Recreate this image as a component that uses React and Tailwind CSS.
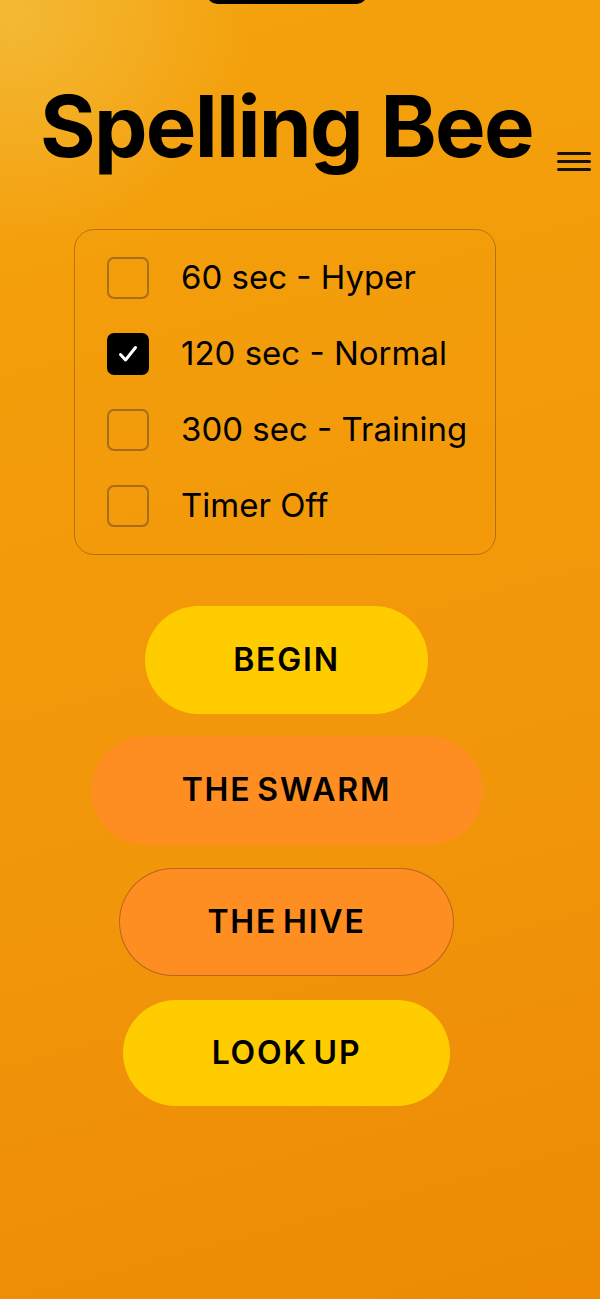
import React from "react";

const options = [
  { label: "60 sec - Hyper", checked: false },
  { label: "120 sec - Normal", checked: true },
  { label: "300 sec - Training", checked: false },
  { label: "Timer Off", checked: false },
];

function Box({ checked }) {
  if (checked) {
    return (
      <div className="w-[42px] h-[42px] rounded-[7px] bg-black flex items-center justify-center shrink-0">
        <svg width="24" height="24" viewBox="0 0 24 24" fill="none">
          <polyline points="4.5,12.5 9.5,18 19.5,5.5" stroke="white" strokeWidth="3" strokeLinecap="round" strokeLinejoin="round" />
        </svg>
      </div>
    );
  }
  return <div className="w-[42px] h-[42px] rounded-[7px] border-2 border-[rgba(70,55,40,0.45)] shrink-0" />;
}

export default function App() {
  return (
    <div
      className="relative w-[600px] h-[1299px] overflow-hidden flex flex-col bg-[radial-gradient(circle_at_2%_1%,rgba(244,195,70,0.7),rgba(244,190,60,0)_17%),linear-gradient(165deg,#f4a20d_0%,#f39a0a_40%,#f1940a_70%,#ec8a04_100%)]"
      style={{ fontFamily: "Inter, 'Liberation Sans', sans-serif" }}
    >
      <div className="absolute top-[-17px] left-[207px] w-[160px] h-[21px] rounded-[12px] bg-black" />

      <div className="flex items-start mt-[84px]">
        <h1 className="ml-[40px] text-[85px] leading-none font-bold text-black tracking-[-1.7px] whitespace-nowrap">
          Spelling Bee
        </h1>
        <div className="ml-auto mr-[9px] mt-[68px] flex flex-col gap-[5.5px] w-[34px]">
          <div className="h-[2.5px] bg-[#1a1208] rounded-full" />
          <div className="h-[2.5px] bg-[#1a1208] rounded-full" />
          <div className="h-[2.5px] bg-[#1a1208] rounded-full" />
        </div>
      </div>

      <div className="w-[573px] flex flex-col items-center">
        <div className="mt-[58px] ml-[-3px] w-[422px] rounded-[20px] border border-[rgba(100,65,25,0.45)] px-[32px] py-[27px] flex flex-col gap-[34px]">
          {options.map((o) => (
            <div key={o.label} className="flex items-center gap-[32px] h-[42px]">
              <Box checked={o.checked} />
              <span className="text-[33px] text-black leading-none whitespace-nowrap">{o.label}</span>
            </div>
          ))}
        </div>

        <button className="mt-[51px] w-[283px] h-[108px] rounded-full bg-[#ffcc00] text-[32px] tracking-[1.8px] [word-spacing:-4px] font-semibold text-black">
          BEGIN
        </button>
        <button className="mt-[22px] w-[392px] h-[109px] rounded-full bg-[#fe8d22] text-[32px] tracking-[1.8px] [word-spacing:-4px] font-semibold text-black">
          THE SWARM
        </button>
        <button className="mt-[23px] w-[335px] h-[108px] rounded-full bg-[#fe8d22] border border-[rgba(110,55,10,0.45)] text-[32px] tracking-[1.8px] [word-spacing:-4px] font-semibold text-black">
          THE HIVE
        </button>
        <button className="mt-[24px] w-[327px] h-[106px] rounded-full bg-[#ffcc00] text-[32px] tracking-[1.8px] [word-spacing:-4px] font-semibold text-black">
          LOOK UP
        </button>
      </div>
    </div>
  );
}
